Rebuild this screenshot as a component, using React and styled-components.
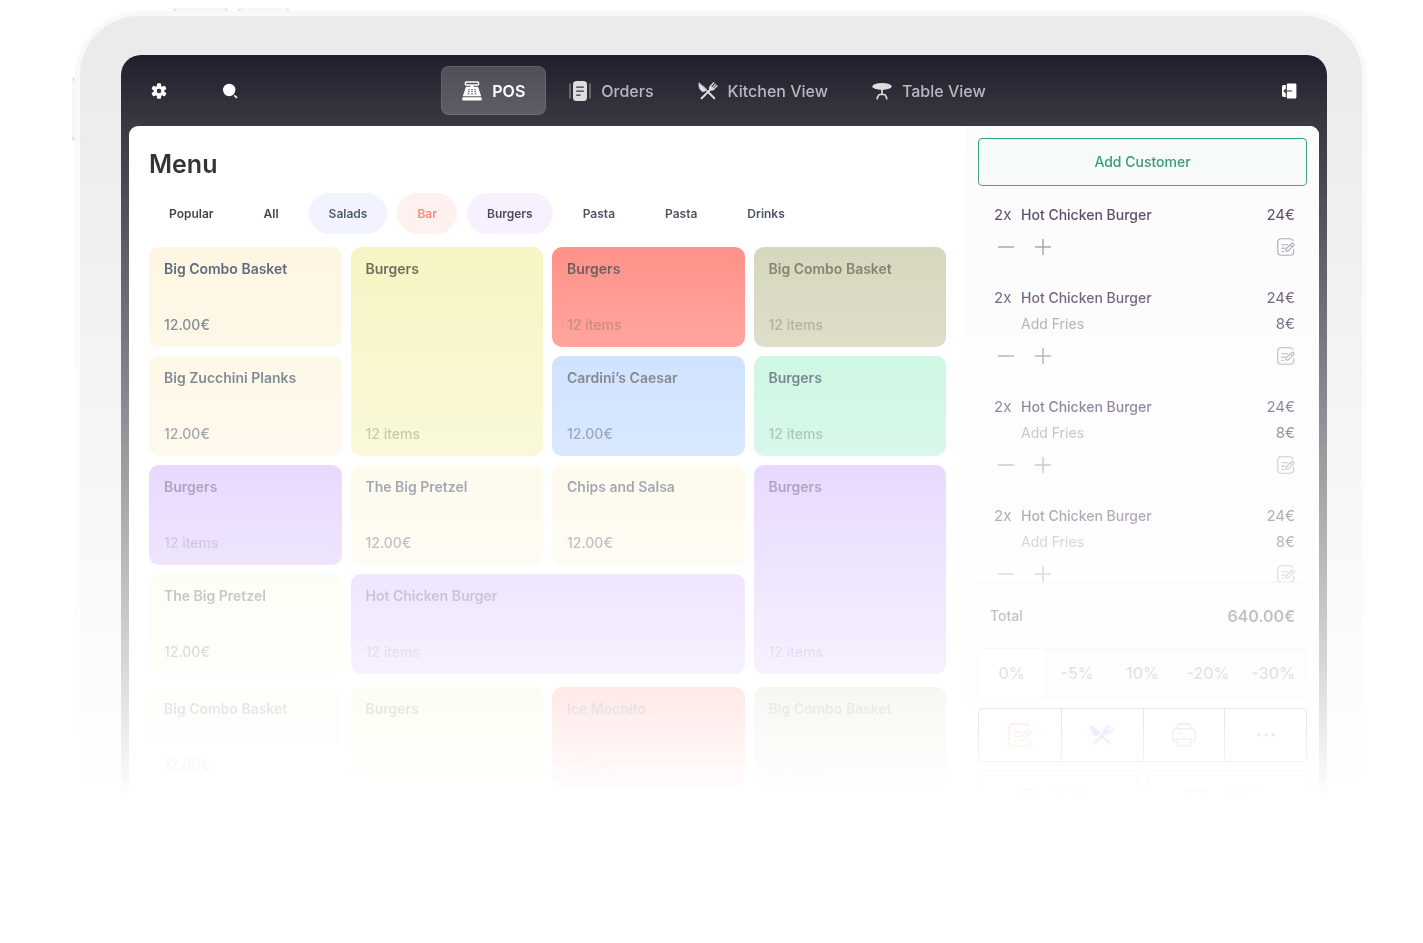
import React from "react";
import styled, { createGlobalStyle } from "styled-components";

const GlobalStyle = createGlobalStyle`
  *, *::before, *::after { box-sizing: border-box; }
  body {
    margin: 0;
    background: #fff;
    font-family: Inter, "Open Sans", sans-serif;
    -webkit-font-smoothing: antialiased;
  }
  button {
    margin: 0;
    padding: 0;
    border: 0;
    background: none;
    font: inherit;
    color: inherit;
    cursor: pointer;
  }
  h1, h2, p, ul { margin: 0; padding: 0; }
  ul { list-style: none; }
  svg { display: block; flex: none; }
`;

/* ---------- device ---------- */

const Stage = styled.div`
  min-height: 100vh;
  padding: 11px 56px 0 75px;
  overflow: hidden;
`;

const Device = styled.div`
  position: relative;
  padding: 5px;
  border-radius: 64px;
  background: #f9f9fb;
  mask-image: linear-gradient(#000 44px, transparent 788px);
`;

const Hardware = styled.div`
  position: relative;
`;

const SideKey = styled.span`
  position: absolute;
  left: ${(p) => p.$left}px;
  top: ${(p) => p.$top}px;
  width: ${(p) => p.$width}px;
  height: ${(p) => p.$height}px;
  border-radius: 3px;
  background: linear-gradient(
    ${(p) => (p.$vertical ? "180deg" : "90deg")},
    #dcdcdc,
    #f7f7f8 8%,
    #f7f7f8 92%,
    #dcdcdc
  );
`;

const Bezel = styled.div`
  padding: 39px 35px 39px 41px;
  border-radius: 59px;
  background: #ebebeb;
`;

const Screen = styled.div`
  padding: 0 8px 8px;
  border-radius: 20px;
  background: linear-gradient(#1e1f2d, #25242f 70px, #25242f);
`;

/* ---------- top bar ---------- */

const TopBar = styled.header`
  display: grid;
  grid-template-columns: 1fr auto 1fr;
  align-items: center;
  height: 71px;
  padding: 0 22px;
  color: #fff;
`;

const Tools = styled.div`
  display: flex;
  gap: 55px;
  justify-content: ${(p) => (p.$end ? "flex-end" : "flex-start")};
`;

const Nav = styled.nav`
  display: flex;
  gap: 2px;
`;

const NavLink = styled.a`
  display: flex;
  align-items: center;
  gap: 10px;
  height: 49px;
  padding: 0 20px;
  border: 1px solid ${(p) => (p.$active ? "rgba(255,255,255,.1)" : "transparent")};
  border-radius: 8px;
  background: ${(p) => (p.$active ? "rgba(255,255,255,.2)" : "none")};
  color: ${(p) => (p.$active ? "#fff" : "#b4b4ba")};
  font-size: 16px;
  font-weight: ${(p) => (p.$active ? 600 : 500)};
  text-decoration: none;
  white-space: nowrap;
  svg { color: ${(p) => (p.$active ? "#fff" : "#dcdcdc")}; }
`;

/* ---------- menu ---------- */

const Panel = styled.div`
  display: flex;
  border-radius: 9px;
  background: #fff;
  overflow: hidden;
`;

const Main = styled.main`
  flex: 1;
  min-width: 0;
  padding: 20px;
`;

const Title = styled.h1`
  color: #111;
  font-size: 25px;
  line-height: 36px;
  font-weight: 600;
`;

const Tabs = styled.div`
  display: flex;
  gap: 10px;
  margin: 11px 0 13px;
`;

const Tab = styled.button`
  height: 41px;
  padding: 0 20px;
  border-radius: 21px;
  background: ${(p) => p.$bg || "none"};
  color: ${(p) => p.$color || "#0b0f14"};
  font-size: 12px;
  font-weight: 600;
`;

const Grids = styled.div`
  display: flex;
  flex-direction: column;
  gap: 13px;
`;

const Grid = styled.div`
  display: grid;
  grid-template-columns: repeat(4, 1fr);
  grid-auto-rows: 100px;
  gap: 9px;
`;

const Card = styled.button`
  display: flex;
  flex-direction: column;
  justify-content: space-between;
  align-items: flex-start;
  grid-column: span ${(p) => p.$cols || 1};
  grid-row: span ${(p) => p.$rows || 1};
  padding: 12px 15px 13px;
  border-radius: 10px;
  background: ${(p) => p.$bg};
  text-align: left;
`;

const CardName = styled.span`
  color: ${(p) => p.$color};
  font-size: 14px;
  line-height: 20px;
  font-weight: 600;
`;

const CardNote = styled.span`
  color: ${(p) => p.$color};
  font-size: 14px;
  line-height: 18px;
  font-weight: 500;
`;

/* ---------- order ---------- */

const Order = styled.aside`
  flex: none;
  width: 353px;
  padding: 12px;
  background: #fbfbfb;
`;

const AddCustomer = styled.button`
  width: 100%;
  height: 48px;
  padding-bottom: 2px;
  border: 1px solid #1f9470;
  border-radius: 4px;
  background: #f5f9f7;
  color: #198964;
  font-size: 14px;
  font-weight: 500;
`;

const Lines = styled.ul`
  display: flex;
  flex-direction: column;
  gap: 18px;
  max-height: 381px;
  margin-top: 15px;
  padding: 0 12px 0 16px;
  overflow: hidden;
`;

const Row = styled.div`
  display: grid;
  grid-template-columns: 27px 1fr auto;
  align-items: center;
  height: 26px;
  color: ${(p) => (p.$muted ? "#918599" : "#321942")};
  font-size: 15px;
`;

const LineName = styled.span`
  grid-column: 2;
  font-size: 14px;
  font-weight: ${(p) => (p.$muted ? 400 : 500)};
`;

const Price = styled.span`
  color: #321942;
`;

const LineTools = styled.div`
  display: flex;
  align-items: center;
  height: 39px;
  padding-left: 3px;
  gap: 19px;
  color: #8b8b8b;
`;

const EditButton = styled.button`
  margin-left: auto;
  color: #948aa0;
`;

const Total = styled.div`
  display: flex;
  justify-content: space-between;
  align-items: center;
  height: 66px;
  padding: 0 12px;
  border-top: 1px solid #e4e4e4;
  color: #000;
  font-size: 14px;
  font-weight: 500;
`;

const Amount = styled.strong`
  font-size: 16px;
  font-weight: 600;
`;

const Discounts = styled.div`
  display: grid;
  grid-template-columns: repeat(5, 1fr);
  height: 50px;
  border: 1px solid #dcdcdc;
  border-radius: 4px;
  background: #f2f2f3;
  overflow: hidden;
`;

const Discount = styled.button`
  background: ${(p) => (p.$active ? "#fff" : "none")};
  color: #545454;
  font-size: 16px;
  font-weight: 500;
`;

const Actions = styled.div`
  display: grid;
  grid-template-columns: repeat(4, 1fr);
  height: 54px;
  margin: 10px 0 8px;
  border: 1px solid #26262a;
  border-radius: 4px;
  background: #fff;
`;

const Action = styled.button`
  display: grid;
  place-items: center;
  color: ${(p) => p.$color};
  & + & { border-left: 1px solid #26262a; }
`;

const Payments = styled.div`
  display: grid;
  grid-template-columns: 1fr 1fr;
  gap: 9px;
`;

const Payment = styled.button`
  display: flex;
  align-items: center;
  justify-content: center;
  gap: 12px;
  height: 52px;
  border: 1px solid #333;
  border-radius: 4px;
  background: #fff;
  color: #222;
  font-size: 18px;
`;

/* ---------- icons ---------- */

const GearIcon = () => (
  <svg width="16" height="16" viewBox="0 0 16 16" fill="currentColor" aria-hidden="true">
    <circle cx="8" cy="8" r="5.400" />
    {[0, 60, 120, 180, 240, 300].map((angle) => (
      <rect key={angle} x="5.900" y=".3" width="4.200" height="5" rx="1.300" transform={`rotate(${angle} 8 8)`} />
    ))}
    <circle cx="8" cy="8" r="2.300" fill="#292834" />
  </svg>
);

const SearchIcon = () => (
  <svg width="16" height="16" viewBox="0 0 16 16" aria-hidden="true">
    <circle cx="7.200" cy="7" r="6.200" fill="currentColor" />
    <path d="M12.800 12.800l1.700 1.600" stroke="currentColor" strokeWidth="1.600" strokeLinecap="round" />
  </svg>
);

const ExitIcon = () => (
  <svg width="16" height="16" viewBox="0 0 16 16" aria-hidden="true">
    <path d="M4.800 1.900H2.800A1.800 1.800 0 0 0 1 3.700v8.600a1.800 1.800 0 0 0 1.800 1.800h2z" fill="currentColor" />
    <path d="M7 .4h7A1.400 1.400 0 0 1 15.400 1.800v12.400a1.400 1.400 0 0 1-1.400 1.400H7a1.200 1.200 0 0 1-1.200-1.200V1.600A1.200 1.200 0 0 1 7 .4z" fill="currentColor" />
    <path d="M11.200 8H3.400M4.900 6.200L3.100 8l1.800 1.800" fill="none" stroke="#282834" strokeWidth="1.100" />
  </svg>
);

const RegisterIcon = () => (
  <svg width="20" height="20" viewBox="0 0 20 20" aria-hidden="true">
    <rect x="3.400" y=".9" width="13.200" height="3.200" rx="1" fill="none" stroke="currentColor" strokeWidth="1.500" />
    <path d="M8.500 4.500h3v1.500h-3z" fill="currentColor" />
    <path d="M4.800 5.800h10.400c.6 0 .9.300 1.100.8l2.900 8.600H.8l2.900-8.600c.2-.5.500-.8 1.100-.8z" fill="currentColor" />
    <rect x=".3" y="16.200" width="19.400" height="3.400" rx="1.200" fill="currentColor" />
    <path d="M6.200 8.600h1.600M9.200 8.600h1.600M12.200 8.600h1.600M5.900 10.700h1.700M9.200 10.700h1.600M12.400 10.700h1.700M5.600 12.800h1.800M9.200 12.800h1.600M12.600 12.800h1.800" stroke="#74737c" strokeWidth="1.200" />
  </svg>
);

const OrdersIcon = () => (
  <svg width="22" height="20" viewBox="0 0 22 20" aria-hidden="true">
    <path d="M1 2.500v15M21 2.500v15" stroke="currentColor" strokeWidth="1.200" opacity=".55" />
    <rect x="4" y="0" width="14" height="20" rx="3.500" fill="currentColor" />
    <path d="M7.200 6.200h7.600M7.200 10.200h7.600M7.200 14.200h4.400" stroke="#2b2a36" strokeWidth="1.300" />
  </svg>
);

const KitchenIcon = ({ size = 20 }) => (
  <svg width={size} height={size} viewBox="0 0 20 20" fill="none" stroke="currentColor" strokeLinecap="round" aria-hidden="true">
    <path d="M9.200 10L16.300 17.200" strokeWidth="2" />
    <path d="M3.600 17.200L13.300 7.600" strokeWidth="2" />
    <path d="M1 2.200c-.6 3.300.7 6.500 3.200 8.300l2.600-.3 1.700-1.700z" fill="currentColor" strokeWidth=".8" strokeLinejoin="round" />
    <path d="M12.200 5.200c-1.200 1.300-.8 2.900.1 3.500.9.700 2.300.8 3.500-.3l-1.600-1.700z" fill="currentColor" strokeWidth="1" />
    <path d="M12.500 5.300l3.300-3.500M14.200 6.900l3.400-3.500M15.600 8.300l3.400-3.500" strokeWidth="1.300" />
  </svg>
);

const TableIcon = () => (
  <svg width="20" height="20" viewBox="0 0 20 20" aria-hidden="true">
    <ellipse cx="10" cy="5.400" rx="9.800" ry="3.500" fill="currentColor" />
    <path d="M10 8v5M5.200 17.600l.9-2.600c.3-1 1-1.500 2-1.500h3.800c1 0 1.700.5 2 1.500l.9 2.600" fill="none" stroke="currentColor" strokeWidth="1.700" strokeLinecap="round" />
  </svg>
);

const MinusIcon = () => (
  <svg width="18" height="18" viewBox="0 0 18 18" stroke="currentColor" strokeWidth="1.500" strokeLinecap="round" aria-hidden="true">
    <path d="M1.500 9h15" />
  </svg>
);

const PlusIcon = () => (
  <svg width="18" height="18" viewBox="0 0 18 18" stroke="currentColor" strokeWidth="1.500" strokeLinecap="round" aria-hidden="true">
    <path d="M1.500 9h15M9 1.500v15" />
  </svg>
);

const EditIcon = ({ size = 18 }) => (
  <svg width={size} height={size} viewBox="0 0 24 24" fill="none" stroke="currentColor" strokeWidth="1.500" strokeLinecap="round" strokeLinejoin="round" aria-hidden="true">
    <path d="M21.300 3.200C20.600 1.700 19.300 1 17 1H6C2.500 1 1 2.500 1 6v12c0 3.500 1.500 5 5 5h11.500c3.300 0 4.700-1.500 4.700-5v-2.500" />
    <path d="M6.500 9h8M6.500 13.500h4M6.500 18h2.300" />
    <path d="M11.800 17.600l.5-3.300 7-6.800c.9-.9 2-.8 2.800 0s.9 1.900 0 2.800l-7 6.800zM17.900 8.900l2.800 2.800" />
  </svg>
);

const PrinterIcon = () => (
  <svg width="24" height="24" viewBox="0 0 24 24" fill="none" stroke="currentColor" strokeWidth="1.500" strokeLinecap="round" strokeLinejoin="round" aria-hidden="true">
    <path d="M5.500 5.500V4C5.500 2 6.500 1 8.500 1h7c2 0 3 1 3 3v1.500" />
    <path d="M5.500 19H4.200C2 19 .8 17.800.8 15.500v-6c0-2.500 1.200-3.800 3.700-3.800h15c2.500 0 3.700 1.300 3.700 3.800v6c0 2.300-1.200 3.500-3.400 3.500h-1.300" />
    <path d="M3.800 16.200h16.400M5.500 16.200v3.300c0 2.300 1.200 3.500 3.500 3.500h6c2.300 0 3.500-1.200 3.500-3.500v-3.300M5.300 10.500h3.700M17.600 10.500h.3" />
  </svg>
);

const DotsIcon = () => (
  <svg width="20" height="20" viewBox="0 0 20 20" fill="currentColor" aria-hidden="true">
    <circle cx="3" cy="10" r="1.800" />
    <circle cx="10" cy="10" r="1.800" />
    <circle cx="17" cy="10" r="1.800" />
  </svg>
);

const CardIcon = () => (
  <svg width="22" height="16" viewBox="0 0 22 16" fill="currentColor" aria-hidden="true">
    <path d="M0 0h22v3H0zM0 5h22v11H0z" />
  </svg>
);

const CashIcon = () => (
  <svg width="22" height="18" viewBox="0 0 22 18" fill="currentColor" aria-hidden="true">
    <path fillRule="evenodd" d="M0 0h22v18H0zM11 3.500a5.500 5.500 0 1 0 0 11 5.500 5.500 0 0 0 0-11z" />
    <circle cx="11" cy="9" r="2" />
  </svg>
);

/* ---------- data ---------- */

const navItems = [
  { label: "POS", icon: <RegisterIcon />, active: true },
  { label: "Orders", icon: <OrdersIcon /> },
  { label: "Kitchen View", icon: <KitchenIcon /> },
  { label: "Table View", icon: <TableIcon /> },
];

const tabs = [
  { label: "Popular" },
  { label: "All" },
  { label: "Salads", bg: "#eef0ff", color: "#192a42" },
  { label: "Bar", bg: "#ffedec", color: "#fc6a5d" },
  { label: "Burgers", bg: "#f5edff", color: "#1b1530" },
  { label: "Pasta", color: "#1b2333" },
  { label: "Pasta", color: "#1b2333" },
  { label: "Drinks", color: "#1b2333" },
];

const tones = {
  cream: { bg: "#fdf3d8", name: "#1b2e45", note: "#3d4955" },
  ivory: { bg: "#fdf8df", name: "#283440", note: "#3d4955" },
  yellow: { bg: "#f3f1ad", name: "#34341f", note: "#919350" },
  red: { bg: "#ff6b5f", name: "#2f1e1f", note: "#ad4a42" },
  olive: { bg: "#c8c9a7", name: "#565236", note: "#898766" },
  blue: { bg: "#aeceff", name: "#2a2f36", note: "#3a4c66" },
  mint: { bg: "#acf1d1", name: "#10263a", note: "#4e9174" },
  purple: { bg: "#cbabfd", name: "#3a2468", note: "#7c58b0" },
};

const firstCards = [
  { name: "Big Combo Basket", note: "12.00€", tone: "cream" },
  { name: "Burgers", note: "12 items", tone: "yellow", rows: 2 },
  { name: "Burgers", note: "12 items", tone: "red" },
  { name: "Big Combo Basket", note: "12 items", tone: "olive" },
  { name: "Big Zucchini Planks", note: "12.00€", tone: "cream" },
  { name: "Cardini’s Caesar", note: "12.00€", tone: "blue" },
  { name: "Burgers", note: "12 items", tone: "mint" },
  { name: "Burgers", note: "12 items", tone: "purple" },
  { name: "The Big Pretzel", note: "12.00€", tone: "cream" },
  { name: "Chips and Salsa", note: "12.00€", tone: "cream" },
  { name: "Burgers", note: "12 items", tone: "purple", rows: 2 },
  { name: "The Big Pretzel", note: "12.00€", tone: "ivory" },
  { name: "Hot Chicken Burger", note: "12 items", tone: "purple", cols: 2 },
];

const lastCards = [
  { name: "Big Combo Basket", note: "12.00€", tone: "ivory" },
  { name: "Burgers", note: "", tone: "yellow" },
  { name: "Ice Mochito", note: "12.00€", tone: "red" },
  { name: "Big Combo Basket", note: "12 items", tone: "olive" },
];

const orderLines = [
  { name: "Hot Chicken Burger", price: "24€" },
  { name: "Hot Chicken Burger", price: "24€", extra: "Add Fries", extraPrice: "8€" },
  { name: "Hot Chicken Burger", price: "24€", extra: "Add Fries", extraPrice: "8€" },
  { name: "Hot Chicken Burger", price: "24€", extra: "Add Fries", extraPrice: "8€" },
];

const discounts = ["0%", "-5%", "10%", "-20%", "-30%"];

function MenuCards({ items }) {
  return (
    <Grid>
      {items.map((item, i) => {
        const tone = tones[item.tone];
        return (
          <Card key={i} $bg={tone.bg} $rows={item.rows} $cols={item.cols}>
            <CardName $color={tone.name}>{item.name}</CardName>
            <CardNote $color={tone.note}>{item.note}</CardNote>
          </Card>
        );
      })}
    </Grid>
  );
}

function OrderLine({ line }) {
  return (
    <li>
      <Row>
        <span>2x</span>
        <LineName>{line.name}</LineName>
        <Price>{line.price}</Price>
      </Row>
      {line.extra && (
        <Row $muted>
          <LineName $muted>{line.extra}</LineName>
          <Price>{line.extraPrice}</Price>
        </Row>
      )}
      <LineTools>
        <button aria-label="Remove one"><MinusIcon /></button>
        <button aria-label="Add one"><PlusIcon /></button>
        <EditButton aria-label="Edit note"><EditIcon /></EditButton>
      </LineTools>
    </li>
  );
}

export default function App() {
  return (
    <>
      <GlobalStyle />
      <Stage>
        <Hardware>
          <SideKey $left={98} $top={-3} $width={55} $height={10} />
          <SideKey $left={163} $top={-3} $width={51} $height={10} />
          <SideKey $left={-3} $top={66} $width={10} $height={64} $vertical />
          <Device>
            <Bezel>
              <Screen>
                <TopBar>
                  <Tools>
                    <button aria-label="Settings"><GearIcon /></button>
                    <button aria-label="Search"><SearchIcon /></button>
                  </Tools>
                  <Nav>
                    {navItems.map((item) => (
                      <NavLink key={item.label} href="#" $active={item.active}>
                        {item.icon}
                        {item.label}
                      </NavLink>
                    ))}
                  </Nav>
                  <Tools $end>
                    <button aria-label="Log out"><ExitIcon /></button>
                  </Tools>
                </TopBar>
                <Panel>
                  <Main>
                    <Title>Menu</Title>
                    <Tabs>
                      {tabs.map((tab, i) => (
                        <Tab key={i} $bg={tab.bg} $color={tab.color}>{tab.label}</Tab>
                      ))}
                    </Tabs>
                    <Grids>
                      <MenuCards items={firstCards} />
                      <MenuCards items={lastCards} />
                    </Grids>
                  </Main>
                  <Order>
                    <AddCustomer>Add Customer</AddCustomer>
                    <Lines>
                      {orderLines.map((line, i) => (
                        <OrderLine key={i} line={line} />
                      ))}
                    </Lines>
                    <Total>
                      <span>Total</span>
                      <Amount>640.00€</Amount>
                    </Total>
                    <Discounts>
                      {discounts.map((value, i) => (
                        <Discount key={value} $active={i === 0}>{value}</Discount>
                      ))}
                    </Discounts>
                    <Actions>
                      <Action $color="#d8541f" aria-label="Note"><EditIcon size={24} /></Action>
                      <Action $color="#7a22d8" aria-label="Kitchen"><KitchenIcon size={24} /></Action>
                      <Action $color="#2050e6" aria-label="Print"><PrinterIcon /></Action>
                      <Action $color="#222" aria-label="More"><DotsIcon /></Action>
                    </Actions>
                    <Payments>
                      <Payment><CardIcon />100%</Payment>
                      <Payment><CashIcon />100%</Payment>
                    </Payments>
                  </Order>
                </Panel>
              </Screen>
            </Bezel>
          </Device>
        </Hardware>
      </Stage>
    </>
  );
}
